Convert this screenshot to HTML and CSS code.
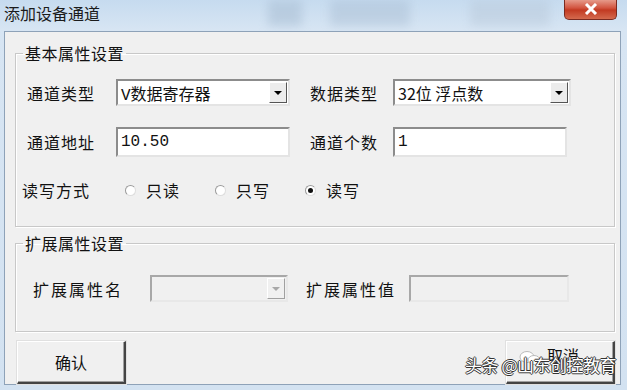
FILE: index.html
```html
<!DOCTYPE html>
<html lang="zh">
<head>
    <meta charset="UTF-8">
    <title>添加设备通道</title>
    <link rel="stylesheet" href="styles.css">
</head>
<body>
    <div class="window">
        <div class="titlebar">
            <span class="title">添加设备通道</span>
            <span class="blur blur-a"></span>
            <span class="blur blur-b"></span>
            <span class="blur blur-c"></span>
            <button class="close" type="button">
                <svg width="14" height="12" viewBox="0 0 14 12"><path d="M2 1 L12 11 M12 1 L2 11" stroke="#fff" stroke-width="3"/></svg>
            </button>
        </div>
        <div class="client">
            <fieldset class="group basic">
                <legend>基本属性设置</legend>
                <div class="row">
                    <label class="lbl">通道类型</label>
                    <div class="combo w173">
                        <span class="val mono">V数据寄存器</span>
                        <span class="arrow"><i class="tri"></i></span>
                    </div>
                    <label class="lbl right">数据类型</label>
                    <div class="combo w177">
                        <span class="val">32位 浮点数</span>
                        <span class="arrow"><i class="tri"></i></span>
                    </div>
                </div>
                <div class="row">
                    <label class="lbl">通道地址</label>
                    <div class="edit w173 mono">10.50</div>
                    <label class="lbl right">通道个数</label>
                    <div class="edit w174 mono">1</div>
                </div>
                <div class="row radios">
                    <label class="lbl">读写方式</label>
                    <span class="radio"><i class="dot"></i>只读</span>
                    <span class="radio"><i class="dot"></i>只写</span>
                    <span class="radio"><i class="dot on"></i>读写</span>
                </div>
            </fieldset>
            <fieldset class="group ext">
                <legend>扩展属性设置</legend>
                <div class="row">
                    <label class="lbl">扩展属性名</label>
                    <div class="combo disabled w137">
                        <span class="val"></span>
                        <span class="arrow"><i class="tri"></i></span>
                    </div>
                    <label class="lbl right2">扩展属性值</label>
                    <div class="edit disabled w159"></div>
                </div>
            </fieldset>
            <div class="buttons">
                <button class="btn" type="button">确认</button>
                <button class="btn cancel" type="button">
                    <svg class="bubble" width="22" height="16" viewBox="0 0 22 16"><ellipse cx="8" cy="7" rx="7" ry="5.5" fill="#fff" stroke="#bbb"/><ellipse cx="15" cy="10" rx="6" ry="4.5" fill="#fff" stroke="#bbb"/></svg>
                    取消
                </button>
            </div>
            <div class="watermark">头条 @山东创控教育</div>
        </div>
    </div>
</body>
</html>
```

FILE: styles.css
```css
body {
    margin: 0;
    padding: 0;
    font-family: "Noto Sans CJK SC", "DejaVu Sans", sans-serif;
    color: #111;
    background: #d9e6f2;
}
.window {
    width: 627px;
    height: 390px;
    display: flex;
    flex-direction: column;
    background: linear-gradient(to bottom, #c6dbef 0, #d7e5f3 30px, #d3e2f1 100%);
    overflow: hidden;
}
.titlebar {
    height: 31px;
    flex-shrink: 0;
    position: relative;
    display: flex;
    align-items: center;
    padding-left: 4px;
}
.title {
    font-size: 16px;
    line-height: 22px;
    color: #1b1b1b;
    margin-top: -5px;
}
.blur {
    position: absolute;
    top: 0;
    height: 26px;
    background: #a9bed3;
    filter: blur(5px);
    opacity: 0.55;
}
.blur-a { left: 268px; width: 34px; }
.blur-b { left: 330px; width: 80px; background: #9db2c9; opacity: 0.35; }
.blur-c { left: 470px; width: 80px; background: #b7c7d8; opacity: 0.45; }
.close {
    position: absolute;
    top: -1px;
    left: 564px;
    width: 53px;
    height: 21px;
    border: 1px solid #7a2a20;
    border-top: none;
    border-radius: 0 0 5px 5px;
    background: linear-gradient(to bottom, #e8a393 0, #d2543f 45%, #c23a22 55%, #d46a4e 100%);
    padding: 0;
    display: flex;
    align-items: center;
    justify-content: center;
}
.client {
    flex: 1;
    margin: 0 6px 5px 4px;
    border: 1px solid #8ea2b8;
    background: #f0f0f0;
    padding: 10px 5px 0 10px;
    display: flex;
    flex-direction: column;
    position: relative;
}
.client > * {
    flex-shrink: 0;
}
.group {
    margin: 0;
    border: 1px solid #c8c8c8;
    box-shadow: inset 1px 1px 0 #fff, 1px 1px 0 #fff;
    padding: 0 0 0 10px;
}
.group legend {
    font-size: 16px;
    padding: 0 2px;
    margin-left: -3px;
    letter-spacing: 0.5px;
    line-height: 22px;
}
.basic {
    height: 168px;
    padding-top: 15px;
}
.ext {
    height: 77px;
    margin-top: 5px;
    padding-top: 21px;
}
.row {
    display: flex;
    align-items: center;
    height: 27px;
    margin-bottom: 21px;
}
.row + .row {
    height: 30px;
    margin-bottom: 18px;
}
.lbl {
    font-size: 16px;
    letter-spacing: 1px;
    width: 89px;
    padding-left: 1px;
}
.lbl.right {
    width: 83px;
    margin-left: 19px;
}
.ext .lbl {
    width: 117px;
    padding-left: 7px;
    letter-spacing: 2px;
}
.ext .lbl.right2 {
    width: 103px;
    margin-left: 18px;
    padding-left: 0;
}
.radios .lbl {
    margin-left: -5px;
    width: 103px;
}
.combo, .edit {
    box-sizing: border-box;
    height: 100%;
    background: #fff;
    border: 2px solid #8c8c8c;
    border-right-color: #e4e4e4;
    border-bottom-color: #e4e4e4;
    display: flex;
    align-items: center;
    font-size: 16px;
}
.combo {
    height: 27px;
}
.combo .val {
    flex: 1;
    padding-left: 3px;
}
.combo .arrow {
    width: 18px;
    height: 21px;
    margin-right: 1px;
    box-sizing: border-box;
    background: #ececec;
    border: 1px solid #fff;
    border-right-color: #555;
    border-bottom-color: #555;
    display: flex;
    align-items: center;
    justify-content: center;
}
.tri {
    width: 0;
    height: 0;
    border-left: 4px solid transparent;
    border-right: 4px solid transparent;
    border-top: 4px solid #000;
    margin-top: 1px;
}
.edit {
    padding-left: 3px;
}
.mono {
    font-family: "Liberation Mono", "Noto Sans CJK SC", monospace;
}
.w173 { width: 174px; }
.w177 { width: 178px; }
.w174 { width: 174px; }
.w137 { width: 138px; }
.w159 { width: 160px; }
.disabled {
    background: #f0f0f0;
    border-color: #a8a8a8 #e8e8e8 #e8e8e8 #a8a8a8;
}
.disabled .arrow {
    border-right-color: #a0a0a0;
    border-bottom-color: #a0a0a0;
    background: #f0f0f0;
}
.disabled .tri {
    border-top-color: #a8a8a8;
}
.radio {
    display: flex;
    align-items: center;
    font-size: 16px;
    margin-right: 35px;
    letter-spacing: 1px;
}
.dot {
    width: 9px;
    height: 9px;
    border-radius: 50%;
    border: 1px solid #9a9a9a;
    border-right-color: #ddd;
    border-bottom-color: #ddd;
    background: #fff;
    margin-right: 10px;
    position: relative;
}
.dot.on::after {
    content: "";
    position: absolute;
    left: 2px;
    top: 2px;
    width: 5px;
    height: 5px;
    border-radius: 50%;
    background: #111;
}
.buttons {
    display: flex;
    justify-content: space-between;
    margin-top: 9px;
    margin-left: 2px;
}
.btn {
    width: 109px;
    height: 43px;
    background: #f0f0f0;
    border: 1px solid #fff;
    border-right: 2px solid #444;
    border-bottom: 2px solid #444;
    box-shadow: inset -1px -1px 0 #a0a0a0, 0 0 0 1px #e0e0e0;
    font-family: inherit;
    font-size: 16px;
    color: #111;
}
.btn.cancel {
    position: relative;
    padding-bottom: 16px;
    padding-left: 12px;
}
.bubble {
    position: absolute;
    left: 12px;
    top: 8px;
}
.watermark {
    position: absolute;
    right: 4px;
    bottom: 7px;
    font-size: 17px;
    color: #fff;
    letter-spacing: -0.5px;
    text-shadow: -1px 0 #333, 1px 0 #333, 0 -1px #333, 0 1px #333;
}
```
